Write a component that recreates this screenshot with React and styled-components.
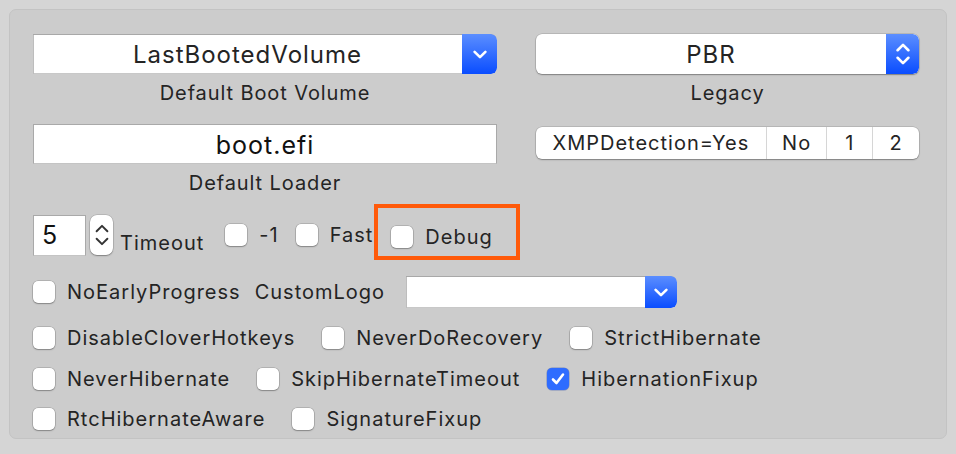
import React from "react";
import styled, { createGlobalStyle } from "styled-components";

const Global = createGlobalStyle`
  body {
    margin: 0;
    background: #d5d5d5;
    font-family: Inter, "Noto Sans", sans-serif;
    color: #242424;
  }
`;

const Page = styled.div`
  padding: 9px;
`;

const Panel = styled.div`
  box-sizing: border-box;
  width: 938px;
  height: 430px;
  background: #cccccc;
  border: 1px solid #c3c3c3;
  border-radius: 7px;
  padding: 24px 27px 0 23px;
`;

const TopGrid = styled.div`
  display: grid;
  grid-template-columns: 464px 383px;
  column-gap: 39px;
  row-gap: 19px;
`;

const Cell = styled.div`
  display: flex;
  flex-direction: column;
  align-items: ${({ $start }) => ($start ? "stretch" : "center")};
`;

const Caption = styled.div`
  font-size: 20px;
  letter-spacing: 0.9px;
  line-height: 24px;
  margin-top: 7px;
  text-align: center;
`;

const PopUp = styled.div`
  box-sizing: border-box;
  display: flex;
  width: ${({ $w }) => $w || "100%"};
  height: ${({ $h }) => $h || 40}px;
  background: #fff;
  border-radius: ${({ $round }) => ($round ? "6px" : "0 6px 6px 0")};
  box-shadow: ${({ $round }) =>
    $round
      ? "0 0 0 0.5px rgba(0,0,0,0.2), 0 1px 1.5px rgba(0,0,0,0.3)"
      : "inset 0 1px 0 #a8a8a8, inset 1px 0 0 #bdbdbd, inset 0 -1px 0 #c8c8c8"};
  overflow: hidden;
`;

const PopText = styled.div`
  flex: 1;
  display: flex;
  align-items: center;
  justify-content: center;
  font-size: 24px;
  letter-spacing: 1px;
  padding-top: 1px;
`;

const BlueButton = styled.div`
  width: ${({ $w }) => $w || 35}px;
  display: flex;
  align-items: center;
  justify-content: center;
  background: linear-gradient(#5b8eff, #0a4dff);
  border-radius: 0 6px 6px 0;
`;

const TextField = styled.div`
  box-sizing: border-box;
  height: 40px;
  background: #fff;
  border: 1px solid #a9a9a9;
  border-bottom-color: #c4c4c4;
  display: flex;
  align-items: center;
  justify-content: center;
  font-size: 25px;
  letter-spacing: 1px;
  color: #111;
  padding-top: 2px;
`;

const Segmented = styled.div`
  display: flex;
  height: 32px;
  margin-top: 3px;
  background: #fff;
  border-radius: 6px;
  box-shadow: 0 0 0 0.5px rgba(0, 0, 0, 0.2), 0 1px 1.5px rgba(0, 0, 0, 0.3);
  overflow: hidden;
`;

const Segment = styled.div`
  width: ${({ $w }) => $w}px;
  display: flex;
  align-items: center;
  justify-content: center;
  font-size: 20px;
  letter-spacing: 1px;
  border-left: ${({ $first }) => ($first ? "none" : "1px solid #d6d6d6")};
`;

const Row = styled.div`
  display: flex;
  align-items: center;
  height: ${({ $h }) => $h || 41}px;
  margin-top: ${({ $mt }) => $mt || 0}px;
`;

const NumberField = styled.div`
  box-sizing: border-box;
  width: 53px;
  height: 41px;
  background: #fff;
  border: 1px solid #a9a9a9;
  border-bottom-color: #c4c4c4;
  display: flex;
  align-items: center;
  padding-left: 8px;
  font-size: 25px;
  color: #111;
`;

const Stepper = styled.div`
  width: 23px;
  height: 40px;
  margin-left: 4px;
  background: #fff;
  border-radius: 7px;
  box-shadow: 0 0 0 0.5px rgba(0, 0, 0, 0.2), 0 1px 1.5px rgba(0, 0, 0, 0.3);
  display: flex;
  align-items: center;
  justify-content: center;
`;

const Label = styled.span`
  font-size: 20px;
  letter-spacing: 1px;
  white-space: nowrap;
  margin-left: ${({ $ml }) => $ml || 0}px;
  margin-right: ${({ $mr }) => $mr || 0}px;
  margin-top: ${({ $mt }) => $mt || 0}px;
`;

const Item = styled.label`
  display: flex;
  align-items: center;
  gap: 12px;
  margin-right: ${({ $mr }) => ($mr === undefined ? 27 : $mr)}px;
  font-size: 20px;
  letter-spacing: 1px;
  white-space: nowrap;
`;

const Box = styled.span`
  box-sizing: border-box;
  width: 22px;
  height: 22px;
  border-radius: 5px;
  background: ${({ $on }) => ($on ? "#2e6cff" : "#fff")};
  box-shadow: ${({ $on }) =>
    $on
      ? "0 0 0 0.5px rgba(0,40,160,0.4)"
      : "0 0 0 0.5px rgba(0,0,0,0.25), 0 1px 1.5px rgba(0,0,0,0.25)"};
  display: flex;
  align-items: center;
  justify-content: center;
  flex-shrink: 0;
`;

const Highlight = styled.div`
  box-sizing: border-box;
  display: flex;
  align-items: center;
  align-self: flex-start;
  height: 56px;
  margin: -10px 0 0 1px;
  padding: 10px 23px 0 13px;
  border: 4px solid #ff5a0a;
`;

const Chevron = ({ up, color = "#fff", w = 2.4 }) => (
  <path
    d={up ? "M1 6 L6 1 L11 6" : "M1 1 L6 6 L11 1"}
    fill="none"
    stroke={color}
    strokeWidth={w}
    strokeLinecap="round"
    strokeLinejoin="round"
  />
);

const Down = () => (
  <svg width="14" height="9" viewBox="-0.5 -0.5 13 8">
    <Chevron />
  </svg>
);

const UpDown = ({ color, w }) => (
  <svg width="14" height="22" viewBox="-0.5 -0.5 13 20">
    <Chevron up color={color} w={w} />
    <g transform="translate(0 12)">
      <Chevron color={color} w={w} />
    </g>
  </svg>
);

const Check = ({ label, on, mr }) => (
  <Item $mr={mr}>
    <Box $on={on}>
      {on && (
        <svg width="16" height="16" viewBox="0 0 16 16">
          <path
            d="M3 8.5 L6.5 12 L13 3.5"
            fill="none"
            stroke="#fff"
            strokeWidth="2.6"
            strokeLinecap="round"
            strokeLinejoin="round"
          />
        </svg>
      )}
    </Box>
    {label}
  </Item>
);

export default function App() {
  return (
    <>
      <Global />
      <Page>
        <Panel>
          <TopGrid>
            <Cell>
              <PopUp>
                <PopText>LastBootedVolume</PopText>
                <BlueButton>
                  <Down />
                </BlueButton>
              </PopUp>
              <Caption>Default Boot Volume</Caption>
            </Cell>
            <Cell>
              <PopUp $round>
                <PopText>PBR</PopText>
                <BlueButton $w={33}>
                  <UpDown />
                </BlueButton>
              </PopUp>
              <Caption>Legacy</Caption>
            </Cell>
            <Cell $start>
              <TextField>boot.efi</TextField>
              <Caption>Default Loader</Caption>
            </Cell>
            <Cell $start>
              <Segmented>
                <Segment $first $w={231}>XMPDetection=Yes</Segment>
                <Segment $w={60}>No</Segment>
                <Segment $w={45}>1</Segment>
                <Segment $w={46}>2</Segment>
              </Segmented>
            </Cell>
          </TopGrid>

          <Row $h={42} $mt={19}>
            <NumberField>5</NumberField>
            <Stepper>
              <UpDown color="#333" w={1.8} />
            </Stepper>
            <Label $ml={7} $mt={16} $mr={21}>
              Timeout
            </Label>
            <Check label="-1" mr={17} />
            <Check label="Fast" mr={0} />
            <Highlight>
              <Check label="Debug" mr={0} />
            </Highlight>
          </Row>

          <Row $h={32} $mt={20}>
            <Check label="NoEarlyProgress" mr={14} />
            <Label $mr={21}>CustomLogo</Label>
            <PopUp $w="271px" $h={32}>
              <PopText />
              <BlueButton $w={32}>
                <Down />
              </BlueButton>
            </PopUp>
          </Row>

          <Row $mt={9}>
            <Check label="DisableCloverHotkeys" />
            <Check label="NeverDoRecovery" />
            <Check label="StrictHibernate" />
          </Row>
          <Row>
            <Check label="NeverHibernate" />
            <Check label="SkipHibernateTimeout" />
            <Check label="HibernationFixup" on />
          </Row>
          <Row $h={40}>
            <Check label="RtcHibernateAware" />
            <Check label="SignatureFixup" />
          </Row>
        </Panel>
      </Page>
    </>
  );
}
